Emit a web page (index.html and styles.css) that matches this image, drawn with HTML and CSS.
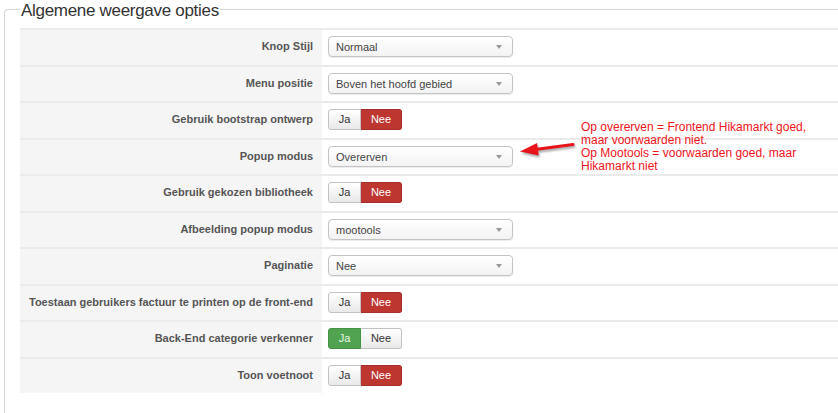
FILE: index.html
```html
<!DOCTYPE html>
<html lang="nl">
<head>
    <meta charset="UTF-8">
    <title>Algemene weergave opties</title>
    <link rel="stylesheet" href="styles.css">
</head>
<body>

    <fieldset class="options">
        <legend>Algemene weergave opties</legend>

        <div class="row">
            <div class="key">Knop Stijl</div>
            <div class="val"><div class="select">Normaal<i class="caret"></i></div></div>
        </div>
        <div class="row">
            <div class="key">Menu positie</div>
            <div class="val"><div class="select">Boven het hoofd gebied<i class="caret"></i></div></div>
        </div>
        <div class="row">
            <div class="key">Gebruik bootstrap ontwerp</div>
            <div class="val"><div class="toggle"><span class="ja">Ja</span><span class="nee on-red">Nee</span></div></div>
        </div>
        <div class="row">
            <div class="key">Popup modus</div>
            <div class="val"><div class="select">Overerven<i class="caret"></i></div></div>
        </div>
        <div class="row">
            <div class="key">Gebruik gekozen bibliotheek</div>
            <div class="val"><div class="toggle"><span class="ja">Ja</span><span class="nee on-red">Nee</span></div></div>
        </div>
        <div class="row">
            <div class="key">Afbeelding popup modus</div>
            <div class="val"><div class="select">mootools<i class="caret"></i></div></div>
        </div>
        <div class="row">
            <div class="key">Paginatie</div>
            <div class="val"><div class="select">Nee<i class="caret"></i></div></div>
        </div>
        <div class="row">
            <div class="key">Toestaan gebruikers factuur te printen op de front-end</div>
            <div class="val"><div class="toggle"><span class="ja">Ja</span><span class="nee on-red">Nee</span></div></div>
        </div>
        <div class="row">
            <div class="key">Back-End categorie verkenner</div>
            <div class="val"><div class="toggle"><span class="ja on-green">Ja</span><span class="nee">Nee</span></div></div>
        </div>
        <div class="row">
            <div class="key">Toon voetnoot</div>
            <div class="val"><div class="toggle"><span class="ja">Ja</span><span class="nee on-red">Nee</span></div></div>
        </div>
    </fieldset>

    <!-- annotation drawn over the screenshot -->
    <svg class="arrow" width="70" height="30" viewBox="0 0 70 30">
        <line x1="25" y1="14.5" x2="63" y2="9.6" stroke="#e8141b" stroke-width="3" stroke-linecap="round"/>
        <polygon points="10,16.5 28.6,20.4 27.1,7.9" fill="#e8141b"/>
    </svg>
    <div class="note">
        Op overerven = Frontend Hikamarkt goed,<br>
        maar voorwaarden niet.<br>
        Op Mootools = voorwaarden goed, maar<br>
        Hikamarkt niet
    </div>

</body>
</html>
```

FILE: styles.css
```css
body {
    margin: 0;
    padding: 0;
    background-color: #fff;
    font-family: "Liberation Sans", Arial, sans-serif;
    overflow: hidden;
}

.options {
    margin: 0 0 0 4px;
    padding: 10px 0 30px 15px;
    min-width: 0;
    border: 1px solid #d6d6d6;
    border-right: 0;
    border-radius: 4px 0 0 0;
}

.options legend {
    padding: 4px 1px 0 1px;
    font-size: 17px;
    line-height: 14px;
    letter-spacing: -0.3px;
    color: #333;
}

.row {
    display: flex;
    height: 36.5px;
    box-sizing: border-box;
    border-top: 2px solid #ebebeb;
}

.key {
    width: 302px;
    box-sizing: border-box;
    padding: 8px 9px 0 4px;
    background-color: #f5f5f5;
    text-align: right;
    font-size: 11px;
    font-weight: bold;
    line-height: 17px;
    color: #555;
}

.val {
    flex: 1;
    padding: 6px 0 0 6px;
}

.select {
    position: relative;
    width: 185px;
    height: 21px;
    box-sizing: border-box;
    padding-left: 7px;
    border: 1px solid #c4c4c4;
    border-radius: 4px;
    background: linear-gradient(#fff, #f3f3f3);
    box-shadow: 0 1px 1px rgba(0, 0, 0, 0.08);
    font-size: 11px;
    line-height: 20px;
    color: #444;
}

.caret {
    position: absolute;
    right: 10px;
    top: 8px;
    border-left: 3px solid transparent;
    border-right: 3px solid transparent;
    border-top: 4px solid #999;
}

.toggle {
    display: flex;
}

.toggle span {
    height: 21px;
    box-sizing: border-box;
    border: 1px solid #c2c2c2;
    background: linear-gradient(#fff, #e9e9e9);
    text-align: center;
    font-size: 11px;
    line-height: 19px;
    color: #333;
}

.toggle .ja {
    width: 33px;
    border-radius: 3px 0 0 3px;
}

.toggle .nee {
    width: 41px;
    border-left: 0;
    border-radius: 0 3px 3px 0;
}

.toggle .on-red {
    background: #bd362f;
    border-color: #a52f29;
    color: #fff;
}

.toggle .on-green {
    background: #51a351;
    border-color: #449244;
    color: #e9f7e9;
}

.note {
    position: absolute;
    left: 581px;
    top: 121px;
    font-size: 12px;
    line-height: 13px;
    color: #f0141b;
}

.arrow {
    position: absolute;
    left: 510px;
    top: 135px;
    filter: drop-shadow(1px 2px 1px rgba(0, 0, 0, 0.35));
}
```
